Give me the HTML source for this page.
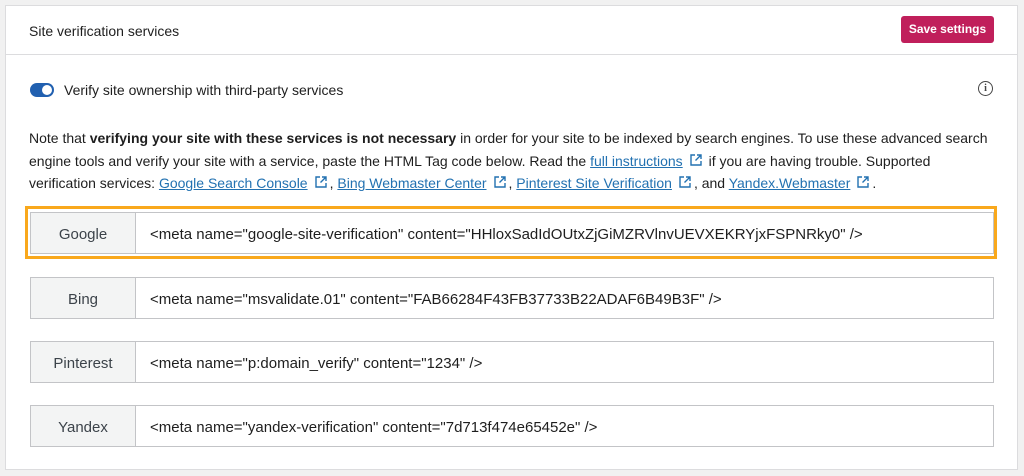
<!DOCTYPE html>
<html><head><meta charset="utf-8"><style>
body{margin:0;width:1024px;height:476px;background:#f1f1f1;font-family:"Liberation Sans",sans-serif;color:#1e1e1e;position:relative;overflow:hidden}
.panel{position:absolute;left:5px;top:5px;width:1011px;height:463px;background:#fff;border:1px solid #dcdcde}
.hdr{position:absolute;left:0;top:0;right:0;height:48px;border-bottom:1px solid #dcdcde}
.hdr span{position:absolute;left:23px;top:17px;font-size:14px}
.btn{position:absolute;left:895px;top:10px;width:93px;height:27px;background:#c01f5b;border-radius:3px;color:#fff;font-weight:bold;font-size:12px;line-height:27px;text-align:center}
.toggle{position:absolute;left:24px;top:77px;width:24px;height:14px;border-radius:8px;background:#2160b0}
.toggle:after{content:"";position:absolute;right:2px;top:2px;width:10px;height:10px;border-radius:50%;background:#fff}
.tl{position:absolute;left:58px;top:76px;font-size:14px}
.info{position:absolute;left:972px;top:75px;width:13px;height:13px;border:1.5px solid #444;border-radius:50%;font-size:10px;line-height:13px;text-align:center;font-weight:bold;color:#444;font-family:"Liberation Serif",serif}
.p{position:absolute;left:23px;top:121px;width:966px;font-size:14px;line-height:22.5px}
a{color:#2271b1;text-decoration:underline}
.ext{display:inline-block;width:12px;height:12px;margin:0 3px 0 7px;position:relative;top:0px}
.row{position:absolute;left:24px;width:962px;height:40px;border:1px solid #c3c4c7;font-size:15px;display:flex}
.row .l{width:104px;background:#f3f4f4;border-right:1px solid #c3c4c7;text-align:center;line-height:44px;color:#3c434a}
.row .v{padding-left:14px;line-height:44px}
.hl{position:absolute;left:19px;top:200px;width:966px;height:47px;border:3px solid #f9a81c}
</style></head><body>
<div class="panel">
<div class="hdr"><span>Site verification services</span><div class="btn">Save settings</div></div>
<div class="toggle"></div><div class="tl">Verify site ownership with third-party services</div>
<div class="info">i</div>
<div class="p">Note that <b>verifying your site with these services is not necessary</b> in order for your site to be indexed by search engines. To use these advanced search engine tools and verify your site with a service, paste the HTML Tag code below. Read the <a>full instructions</a><svg class="ext" viewBox="0 0 12 12" fill="none" stroke="#2271b1" stroke-width="1.4"><path d="M5 1H1v10h10V7M7 1h4v4M11 1L5.5 6.5"/></svg> if you are having trouble. Supported verification services: <a>Google Search Console</a><svg class="ext" viewBox="0 0 12 12" fill="none" stroke="#2271b1" stroke-width="1.4"><path d="M5 1H1v10h10V7M7 1h4v4M11 1L5.5 6.5"/></svg>, <a>Bing Webmaster Center</a><svg class="ext" viewBox="0 0 12 12" fill="none" stroke="#2271b1" stroke-width="1.4"><path d="M5 1H1v10h10V7M7 1h4v4M11 1L5.5 6.5"/></svg>, <a>Pinterest Site Verification</a><svg class="ext" viewBox="0 0 12 12" fill="none" stroke="#2271b1" stroke-width="1.4"><path d="M5 1H1v10h10V7M7 1h4v4M11 1L5.5 6.5"/></svg>, and <a>Yandex.Webmaster</a><svg class="ext" viewBox="0 0 12 12" fill="none" stroke="#2271b1" stroke-width="1.4"><path d="M5 1H1v10h10V7M7 1h4v4M11 1L5.5 6.5"/></svg>.</div>
<div class="hl"></div>
<div class="row" style="top:206px"><div class="l">Google</div><div class="v">&lt;meta name="google-site-verification" content="HHloxSadIdOUtxZjGiMZRVlnvUEVXEKRYjxFSPNRky0" /&gt;</div></div>
<div class="row" style="top:271px"><div class="l">Bing</div><div class="v">&lt;meta name="msvalidate.01" content="FAB66284F43FB37733B22ADAF6B49B3F" /&gt;</div></div>
<div class="row" style="top:335px"><div class="l">Pinterest</div><div class="v">&lt;meta name="p:domain_verify" content="1234" /&gt;</div></div>
<div class="row" style="top:399px"><div class="l">Yandex</div><div class="v">&lt;meta name="yandex-verification" content="7d713f474e65452e" /&gt;</div></div>
</div>
</body></html>
